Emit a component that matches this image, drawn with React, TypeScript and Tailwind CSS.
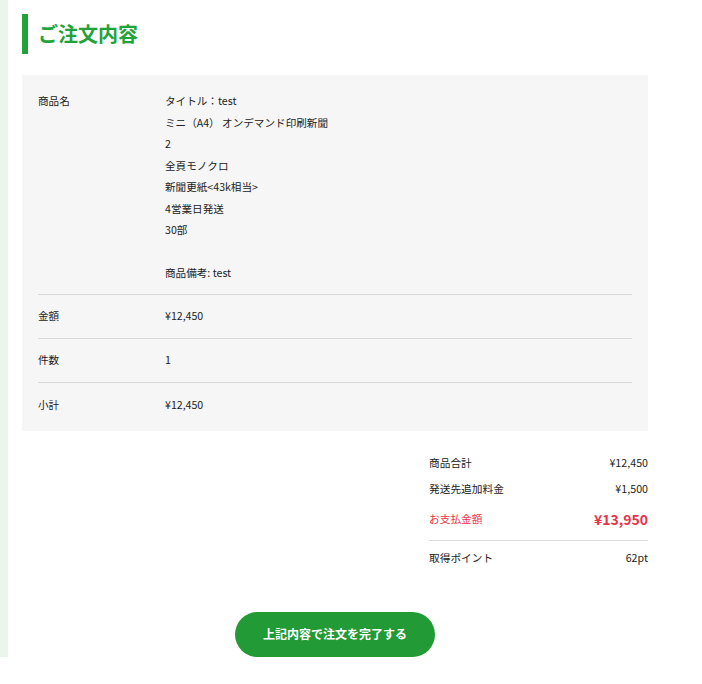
const rows = [
  { label: '金額', value: '¥12,450' },
  { label: '件数', value: '1' },
  { label: '小計', value: '¥12,450' },
]

const productLines = [
  'タイトル：test',
  'ミニ（A4） オンデマンド印刷新聞',
  '2',
  '全頁モノクロ',
  '新聞更紙<43k相当>',
  '4営業日発送',
  '30部',
  '',
  '商品備考: test',
]

export default function App() {
  return (
    <div
      className="w-[702px] h-[684px] bg-white text-[#222] overflow-hidden"
      style={{ fontFamily: '"Noto Sans CJK JP", "Noto Sans", sans-serif' }}
    >
      <div className="flex">
        <div className="w-[8px] bg-[#e9f6e9] shrink-0" />
        <div className="w-[626px] ml-[14px] pt-[14px]">
          <div className="flex items-center h-[40px] border-l-[6px] border-[#22a33a] pl-[10px]">
            <h2 className="text-[20px] font-bold text-[#22a33a] leading-none">ご注文内容</h2>
          </div>

          <div className="mt-[21px] bg-[#f6f6f6] px-[16px] py-[4px] text-[10.6px] leading-[21.5px]">
            <div className="flex pt-[11px] pb-[10px] border-b border-[#d9d9d9]">
              <div className="w-[127px] shrink-0 h-[21.5px]">商品名</div>
              <div>
                {productLines.map((l, i) => (
                  <div key={i} className="h-[21.5px]">{l}</div>
                ))}
              </div>
            </div>
            {rows.map((r, i) => (
              <div
                key={r.label}
                className={'flex h-[44px] items-center ' + (i < rows.length - 1 ? 'border-b border-[#d9d9d9]' : '')}
              >
                <div className="w-[127px] shrink-0">{r.label}</div>
                <div>{r.value}</div>
              </div>
            ))}
          </div>

          <div className="ml-[407px] w-[219px] mt-[22px] text-[10.7px]">
            <div className="flex justify-between items-center h-[22px]">
              <span>商品合計</span>
              <span>¥12,450</span>
            </div>
            <div className="flex justify-between items-center h-[22px] mt-[4px]">
              <span>発送先追加料金</span>
              <span>¥1,500</span>
            </div>
            <div className="flex justify-between items-center h-[26px] mt-[6px] text-[#e8334a]">
              <span>お支払金額</span>
              <span className="text-[14px] font-bold">¥13,950</span>
            </div>
            <div className="border-t border-[#d9d9d9] mt-[7px] pt-[7px]">
              <div className="flex justify-between items-center h-[22px]">
                <span>取得ポイント</span>
                <span>62pt</span>
              </div>
            </div>
          </div>

          <div className="flex justify-center mt-[42px]">
            <button className="w-[200px] h-[45px] rounded-full bg-[#229a35] text-white text-[12px] font-bold">
              上記内容で注文を完了する
            </button>
          </div>
        </div>
      </div>
    </div>
  )
}
